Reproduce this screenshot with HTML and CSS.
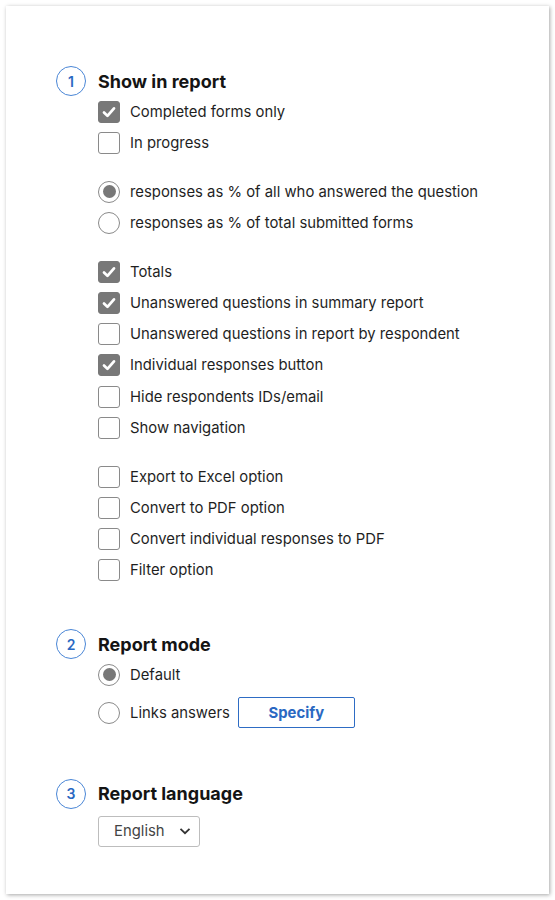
FILE: index.html
```html
<!DOCTYPE html>
<html lang="en">
<head>
<meta charset="utf-8">
<title>Report settings</title>
<link rel="stylesheet" href="styles.css">
</head>
<body>
<div class="card">

  <section class="section">
    <div class="section-head">
      <span class="step">1</span>
      <h2 class="section-title">Show in report</h2>
    </div>
    <div class="options">
      <div class="group">
        <label class="row"><span class="box checked"><svg viewBox="0 0 22 22"><path d="M5.5 11.5l3.8 3.8 7.2-8.3"/></svg></span>Completed forms only</label>
        <label class="row"><span class="box"></span>In progress</label>
      </div>
      <div class="group">
        <label class="row"><span class="radio selected"></span>responses as % of all who answered the question</label>
        <label class="row"><span class="radio"></span>responses as % of total submitted forms</label>
      </div>
      <div class="group">
        <label class="row"><span class="box checked"><svg viewBox="0 0 22 22"><path d="M5.5 11.5l3.8 3.8 7.2-8.3"/></svg></span>Totals</label>
        <label class="row"><span class="box checked"><svg viewBox="0 0 22 22"><path d="M5.5 11.5l3.8 3.8 7.2-8.3"/></svg></span>Unanswered questions in summary report</label>
        <label class="row"><span class="box"></span>Unanswered questions in report by respondent</label>
        <label class="row"><span class="box checked"><svg viewBox="0 0 22 22"><path d="M5.5 11.5l3.8 3.8 7.2-8.3"/></svg></span>Individual responses button</label>
        <label class="row"><span class="box"></span>Hide respondents IDs/email</label>
        <label class="row"><span class="box"></span>Show navigation</label>
      </div>
      <div class="group">
        <label class="row"><span class="box"></span>Export to Excel option</label>
        <label class="row"><span class="box"></span>Convert to PDF option</label>
        <label class="row"><span class="box"></span>Convert individual responses to PDF</label>
        <label class="row"><span class="box"></span>Filter option</label>
      </div>
    </div>
  </section>

  <section class="section mode">
    <div class="section-head">
      <span class="step">2</span>
      <h2 class="section-title">Report mode</h2>
    </div>
    <div class="options">
      <label class="row"><span class="radio selected"></span>Default</label>
      <div class="row row-action">
        <span class="radio"></span>Links answers
        <button class="btn-outline" type="button">Specify</button>
      </div>
    </div>
  </section>

  <section class="section language">
    <div class="section-head">
      <span class="step">3</span>
      <h2 class="section-title">Report language</h2>
    </div>
    <div class="options">
      <div class="select">
        <span>English</span>
        <svg viewBox="0 0 12 8"><path d="M1.5 1.8L6 6.2l4.5-4.4"/></svg>
      </div>
    </div>
  </section>

</div>
</body>
</html>
```

FILE: styles.css
```css
html, body {
  margin: 0;
  padding: 0;
  background: #ffffff;
}

body {
  padding: 6px;
  font-family: Inter, "Noto Sans", "Liberation Sans", sans-serif;
  color: #1f1f1f;
}

.card {
  box-sizing: border-box;
  width: 543px;
  height: 888px;
  background: #fff;
  box-shadow: 1px 1px 4px rgba(0, 0, 0, 0.35);
  padding: 60px 0 0 50px;
}

.section-head {
  display: flex;
  align-items: center;
  gap: 12px;
  height: 30px;
}

.step {
  box-sizing: border-box;
  width: 30px;
  height: 30px;
  border: 1.5px solid #4a86d6;
  border-radius: 50%;
  display: flex;
  align-items: center;
  justify-content: center;
  color: #2a68c2;
  font-weight: 600;
  font-size: 14px;
}

.section-title {
  margin: 0;
  font-size: 18px;
  font-weight: 700;
  color: #141414;
}

.options {
  margin-left: 42px;
}

.group + .group {
  margin-top: 17.5px;
}

.row {
  display: flex;
  align-items: center;
  gap: 10px;
  height: 31.25px;
  font-size: 14.85px;
  color: #1f1f1f;
}

.box {
  box-sizing: border-box;
  width: 22px;
  height: 22px;
  border: 1px solid #8a8a8a;
  border-radius: 3px;
  flex: none;
  display: flex;
  align-items: center;
  justify-content: center;
}

.box.checked {
  background: #787878;
  border-color: #787878;
}

.box svg {
  width: 22px;
  height: 22px;
  fill: none;
  stroke: #fff;
  stroke-width: 3;
  stroke-linecap: round;
  stroke-linejoin: round;
}

.radio {
  box-sizing: border-box;
  width: 22px;
  height: 22px;
  border: 1px solid #8a8a8a;
  border-radius: 50%;
  flex: none;
  display: flex;
  align-items: center;
  justify-content: center;
}

.radio.selected::after {
  content: "";
  width: 13px;
  height: 13px;
  border-radius: 50%;
  background: #787878;
}

.mode {
  margin-top: 43px;
}

.row-action {
  margin-top: 7px;
}

.btn-outline {
  margin-left: -2px;
  box-sizing: border-box;
  width: 117px;
  height: 31px;
  background: #fff;
  border: 1px solid #2e6cc4;
  border-radius: 2px;
  color: #2a68c2;
  font-family: inherit;
  font-size: 14.85px;
  font-weight: 700;
}

.language {
  margin-top: 50px;
}

.language .options {
  margin-top: 7px;
}

.select {
  box-sizing: border-box;
  width: 102px;
  height: 31px;
  border: 1px solid #bdbdbd;
  border-radius: 3px;
  display: flex;
  align-items: center;
  justify-content: space-between;
  padding: 0 8px 0 15px;
  font-size: 14.85px;
  color: #444;
}

.select svg {
  width: 12px;
  height: 8px;
  fill: none;
  stroke: #333;
  stroke-width: 1.8;
}
```
